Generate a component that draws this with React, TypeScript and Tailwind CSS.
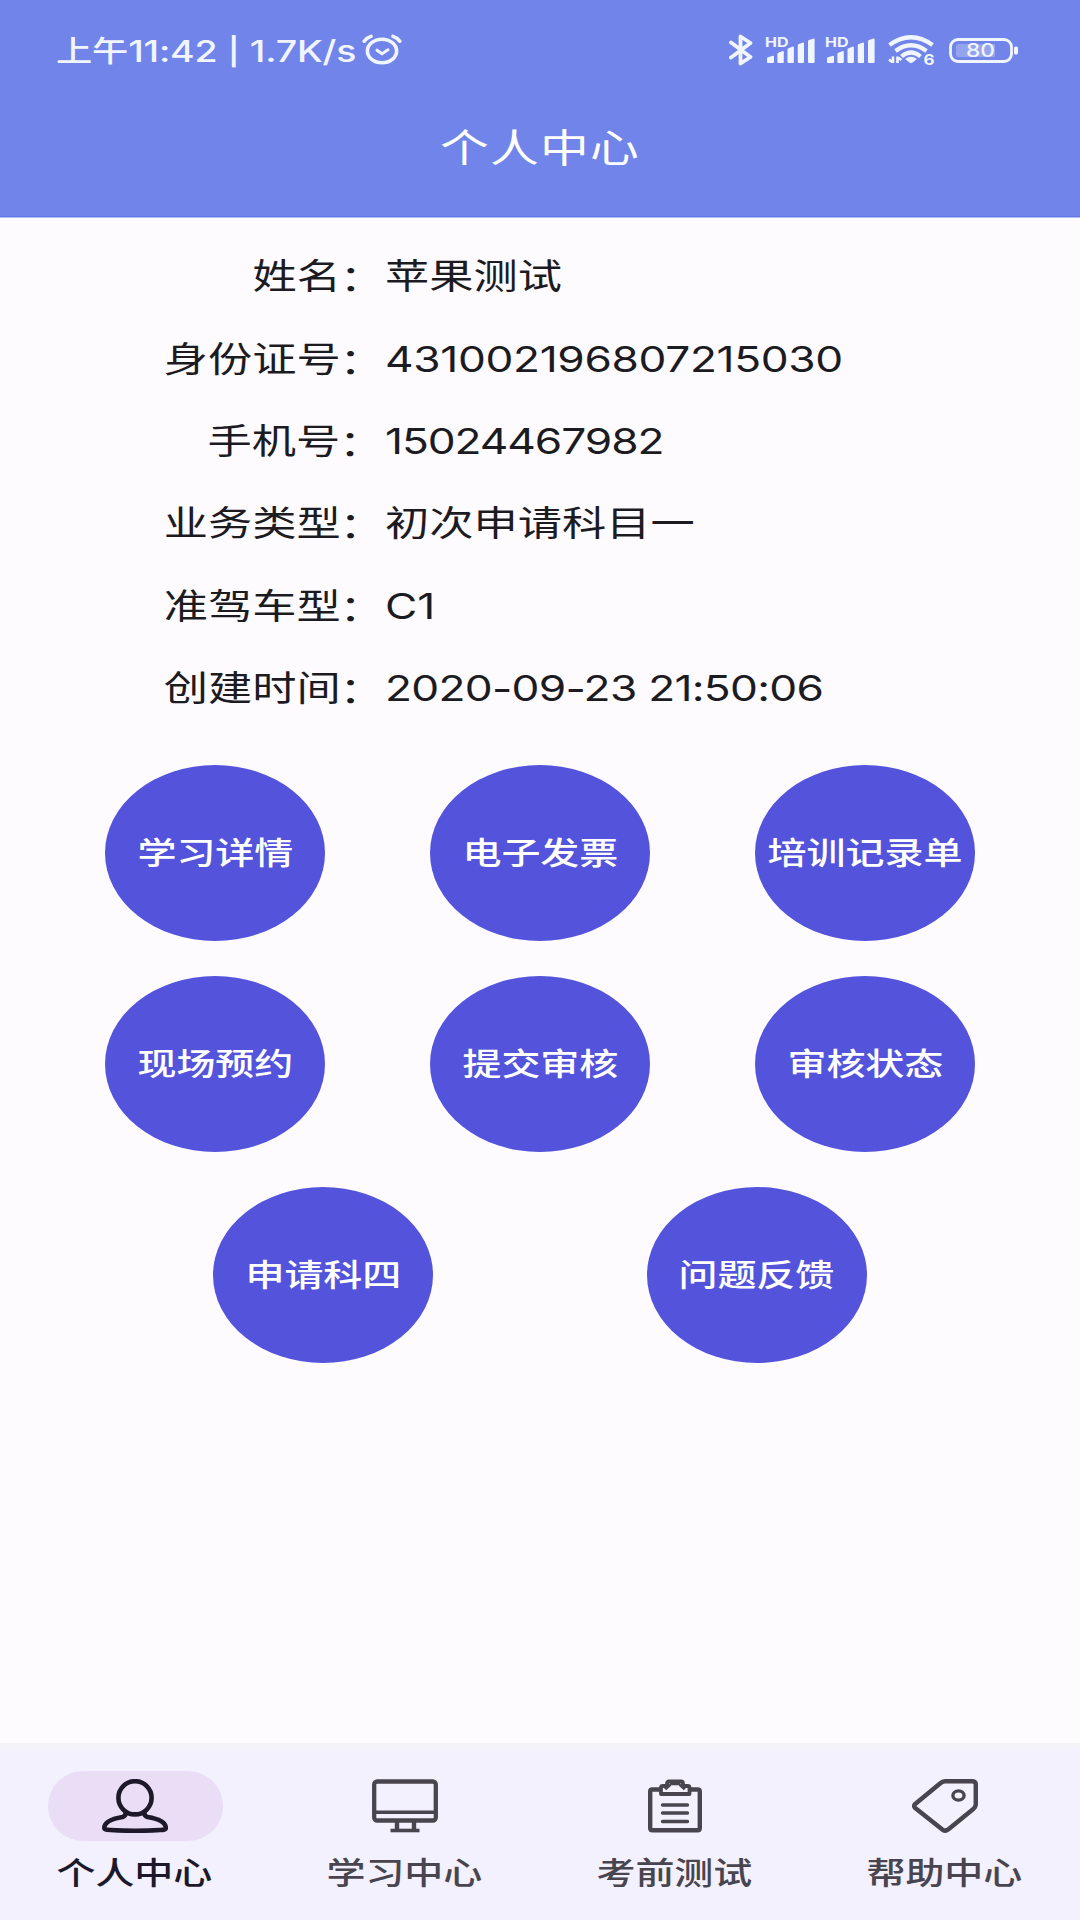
import { ReactNode } from 'react'

interface InfoRow {
  label: string
  value: string
  tracking?: string
}

const infoRows: InfoRow[] = [
  { label: '姓名', value: '苹果测试' },
  { label: '身份证号', value: '431002196807215030', tracking: 'tracking-[-0.27px]' },
  { label: '手机号', value: '15024467982', tracking: 'tracking-[-0.85px]' },
  { label: '业务类型', value: '初次申请科目一' },
  { label: '准驾车型', value: 'C1' },
  { label: '创建时间', value: '2020-09-23 21:50:06', tracking: 'tracking-[-0.57px]' },
]

const actionRows = [
  ['学习详情', '电子发票', '培训记录单'],
  ['现场预约', '提交审核', '审核状态'],
  ['申请科四', '问题反馈'],
]

function AlarmIcon() {
  return (
    <svg width="40" height="32" viewBox="0 0 40 32" fill="none" stroke="currentColor" strokeLinecap="round">
      <ellipse cx="20" cy="17" rx="14.6" ry="11.8" strokeWidth="3.6" />
      <path d="M15 16.2l5 3.6 6-4" strokeWidth="3" strokeLinejoin="round" />
      <path d="M2.2 7.2Q4.5 3.8 9 2.4M37.8 7.2Q35.5 3.8 31 2.4" strokeWidth="3.6" />
    </svg>
  )
}

function BluetoothIcon() {
  return (
    <svg width="24" height="32" viewBox="0 0 24 32" fill="none" stroke="currentColor" strokeWidth="3.8" strokeLinejoin="round" strokeLinecap="round">
      <path d="M2 8.5L21.5 23 11.5 29.5V2.5L21.5 9 2 23.5" />
    </svg>
  )
}

function SignalIcon() {
  return (
    <svg width="50" height="40" viewBox="0 -5 50 40" fill="currentColor">
      <text x="0" y="11.5" textLength="23.5" lengthAdjust="spacingAndGlyphs" className="font-['Inter',sans-serif] text-[13px] font-bold">
        HD
      </text>
      <path d="M2 27v-3.500q0-1 1-1.200l5-1.500q1 0 1 1V27q0 1-1 1H3q-1 0-1-1z" />
      <path d="M12.400 27v-8q0-1 1-1.300l4.400-1.700q1 0 1 1v10q0 1-1 1h-4.400q-1 0-1-1z" />
      <path d="M22.500 27V14.500q0-1 1-1.300l4.400-1.700q1 0 1 1V27q0 1-1 1h-4.400q-1 0-1-1z" />
      <path d="M32.800 27V10.500q0-1 1-1.400L38 7.400q1 0 1 1V27q0 1-1 1h-4.200q-1 0-1-1z" />
      <path d="M43 27V6.500q0-1 1-1.400l4.600-1.600q1 0 1 1V27q0 1-1 1H44q-1 0-1-1z" />
    </svg>
  )
}

function WifiIcon() {
  return (
    <svg width="48" height="32" viewBox="0 0 48 32" fill="none" stroke="currentColor" strokeWidth="4.2">
      <path d="M1.5 11Q23 -4.500 44.500 11" />
      <path d="M7.500 17Q23 5.500 38.500 17" />
      <path d="M13.500 22.500Q23 14.500 32.500 22.500" />
      <path d="M17 25Q23 20.500 29 25L24.500 28.500Q23 29.500 21.500 28.500z" fill="currentColor" stroke="none" />
      <path d="M5 22.500v6.500M1 25.500l3 2.500M9.500 29v-6.500M10 23.500l3.500 2.500" strokeWidth="2.600" />
      <text x="35.500" y="30.500" textLength="11" lengthAdjust="spacingAndGlyphs" fill="currentColor" stroke="none" className="font-['Inter',sans-serif] text-[14px] font-bold">
        6
      </text>
    </svg>
  )
}

function BatteryIcon() {
  return (
    <svg width="70" height="28" viewBox="0 0 70 28" fill="none">
      <rect x="1.5" y="3.5" width="61" height="22" rx="7.5" stroke="currentColor" strokeWidth="2.8" />
      <path d="M7 10q0-2 2-2h37v13H9q-2 0-2-2z" fill="#95a4ef" />
      <rect x="65" y="10.5" width="4" height="8" rx="1.5" fill="currentColor" />
      <text x="17" y="21" textLength="29" lengthAdjust="spacingAndGlyphs" fill="currentColor" className="font-['Inter',sans-serif] text-[18px] font-medium">
        80
      </text>
    </svg>
  )
}

function UserIcon() {
  return (
    <svg width="66" height="54" viewBox="0 0 66 54" fill="none" stroke="currentColor" strokeWidth="4.6">
      <ellipse cx="33" cy="18.8" rx="16.6" ry="16.6" />
      <path d="M23.500 32v3q0 2-3 3Q2.300 41 2.300 49q0 2 6 2 25 1.600 50 0 5.500 0 5.500-2 0-8-18.300-11-3-1-3-3v-3" />
    </svg>
  )
}

function MonitorIcon() {
  return (
    <svg width="66" height="54" viewBox="0 0 66 54" fill="none" stroke="currentColor">
      <rect x="2.200" y="2.500" width="61.600" height="39" rx="3" strokeWidth="4.300" />
      <path d="M3 33.300h60" strokeWidth="3.400" />
      <path d="M25 42v9M42 42v9" strokeWidth="4.400" />
      <path d="M18.500 51.500h29" strokeWidth="3.600" />
    </svg>
  )
}

function ClipboardIcon() {
  return (
    <svg width="54" height="54" viewBox="0 0 54 54" fill="none" stroke="currentColor">
      <path d="M12 10.500H4.500Q2.200 10.500 2.200 12.500V49q0 2.300 2.300 2.300h45q2.300 0 2.300-2.300V12.500q0-2-2.300-2H42" strokeWidth="4.400" />
      <path d="M13 15V8.500q0-1.500 2-1.500h4V4.500q0-2 2-2h12q2 0 2 2V7h4.500q2 0 2 1.500V15z" strokeWidth="3.800" strokeLinejoin="round" />
      <path d="M17 10l5-4.500M37 10l-5-4.500M22 4.500h10" strokeWidth="3.600" />
      <path d="M14.500 26h25M14.500 34h25M14.500 42.500h25" strokeWidth="3.400" strokeLinecap="round" />
    </svg>
  )
}

function TagIcon() {
  return (
    <svg width="66" height="54" viewBox="0 0 66 54" fill="none" stroke="currentColor" strokeLinejoin="round">
      <path d="M33 2.300h27q3.800 0 3.800 3.300V25q0 3-2.500 5L36.500 50.300Q33 53 30 50.300L3.200 29Q1 27 3.200 25L28 4.500Q30.500 2.300 33 2.300z" strokeWidth="4.500" />
      <ellipse cx="46.500" cy="16.500" rx="5.600" ry="4.600" strokeWidth="3.400" />
    </svg>
  )
}

interface NavItem {
  label: string
  icon: ReactNode
  active?: boolean
}

const navItems: NavItem[] = [
  { label: '个人中心', icon: <UserIcon />, active: true },
  { label: '学习中心', icon: <MonitorIcon /> },
  { label: '考前测试', icon: <ClipboardIcon /> },
  { label: '帮助中心', icon: <TagIcon /> },
]

export default function App() {
  return (
    <div className="flex h-[1920px] w-[1080px] flex-col overflow-hidden bg-[#fefbff] font-['Inter','Noto_Sans_CJK_SC',sans-serif] text-[#1c1b1f]">
      {/* Header */}
      <header className="h-[217px] border-b border-[#6077e6] bg-[#7184e9] text-white shadow-[0_1px_0_#b4bff4]">
        <div className="flex h-[100px] items-center justify-between pl-14 pr-[61px] text-[#f0f5ff]">
          <div className="flex items-center">
            <div className="w-[306px] whitespace-nowrap pt-0.5">
              <span className="inline-block origin-left scale-x-125 text-[30px] font-medium leading-10 tracking-[-0.15px]">
                <span className="text-[29px]">上午</span>11:42 <span className="inline-block scale-y-90">|</span> 1.7K/s
              </span>
            </div>
            <AlarmIcon />
          </div>
          <div className="flex items-center">
            <BluetoothIcon />
            <div className="ml-3 flex gap-2.5">
              <SignalIcon />
              <SignalIcon />
            </div>
            <div className="ml-[13px] mr-[13px]">
              <WifiIcon />
            </div>
            <BatteryIcon />
          </div>
        </div>
        <h1 className="mt-[18px] text-center text-[39px] leading-[60px]">
          <span className="-mr-px inline-block scale-x-125 tracking-[1px]">个人中心</span>
        </h1>
      </header>

      <main className="flex-1">
        {/* Profile info */}
        <dl className="pt-[19px] text-[35.4px]">
          {infoRows.map((row) => (
            <div key={row.label} className="flex h-[82.4px] items-center leading-[60px]">
              <dt className="w-[385px] text-right">
                <span className="inline-block origin-right scale-x-125">
                  {row.label}
                  <span className="relative -left-px top-0.5">：</span>
                </span>
              </dt>
              <dd>
                <span className={`inline-block origin-left scale-x-125 whitespace-nowrap ${row.tracking ?? ''}`}>
                  {row.value}
                </span>
              </dd>
            </div>
          ))}
        </dl>

        {/* Actions */}
        <div className="mt-[35px] flex flex-col gap-[35px]">
          {actionRows.map((row) => (
            <div key={row[0]} className="flex justify-evenly">
              {row.map((label) => (
                <button
                  key={label}
                  className="flex h-44 w-55 items-center justify-center rounded-[50%] bg-[#5353dc] text-[31.2px] font-medium text-white"
                >
                  <span className="inline-block scale-x-125 whitespace-nowrap">{label}</span>
                </button>
              ))}
            </div>
          ))}
        </div>
      </main>

      {/* Bottom navigation */}
      <nav className="flex h-[177px] bg-linear-to-b from-[#f4f3f6] to-[#f3f1fd] to-5%">
        {navItems.map((item) => (
          <div
            key={item.label}
            className={`flex flex-1 flex-col items-center pt-7 ${item.active ? 'text-[#1d192b]' : 'text-[#49454f]'}`}
          >
            <div
              className={`flex h-[70px] w-[175px] items-center justify-center rounded-full ${
                item.active ? 'bg-[#eaddf6]' : ''
              }`}
            >
              {item.icon}
            </div>
            <span className="mr-0.5 mt-2 inline-block scale-x-125 text-[31.2px] font-medium leading-[48px]">
              {item.label}
            </span>
          </div>
        ))}
      </nav>
    </div>
  )
}
